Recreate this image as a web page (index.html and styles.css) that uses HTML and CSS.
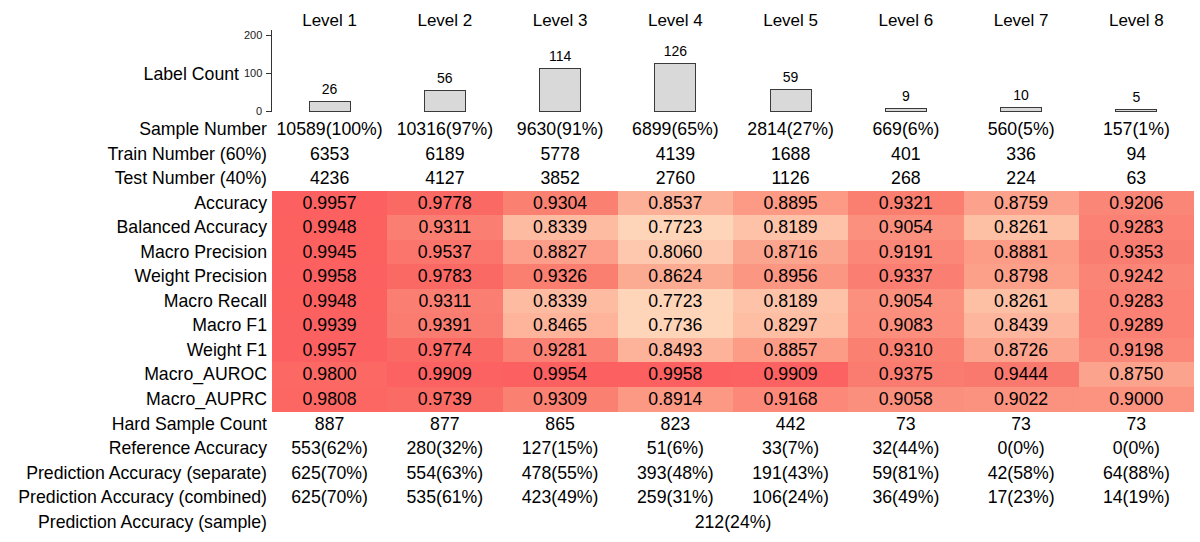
FILE: index.html
```html
<!DOCTYPE html>
<html lang="en">
<head>
<meta charset="utf-8">
<title>Level metrics</title>
<link rel="stylesheet" href="styles.css">
</head>
<body>
<div class="fig">
  <div class="corner"></div>
  <div class="lvl">Level 1</div>
  <div class="lvl">Level 2</div>
  <div class="lvl">Level 3</div>
  <div class="lvl">Level 4</div>
  <div class="lvl">Level 5</div>
  <div class="lvl">Level 6</div>
  <div class="lvl">Level 7</div>
  <div class="lvl">Level 8</div>

  <div class="axis-cell">
    <span class="axis-title">Label Count</span>
    <div class="axis">
      <div class="ticks">
        <div class="tick"><span>200</span><i></i></div>
        <div class="tick"><span>100</span><i></i></div>
        <div class="tick"><span>0</span><i></i></div>
      </div>
      <div class="axis-line"></div>
    </div>
  </div>
  <div class="bar-cell"><span class="bar-val">26</span><div class="bar" style="height:10.9px"></div></div>
  <div class="bar-cell"><span class="bar-val">56</span><div class="bar" style="height:22.3px"></div></div>
  <div class="bar-cell"><span class="bar-val">114</span><div class="bar" style="height:44.3px"></div></div>
  <div class="bar-cell"><span class="bar-val">126</span><div class="bar" style="height:48.9px"></div></div>
  <div class="bar-cell"><span class="bar-val">59</span><div class="bar" style="height:23.4px"></div></div>
  <div class="bar-cell"><span class="bar-val">9</span><div class="bar" style="height:4.4px"></div></div>
  <div class="bar-cell"><span class="bar-val">10</span><div class="bar" style="height:4.8px"></div></div>
  <div class="bar-cell"><span class="bar-val">5</span><div class="bar" style="height:2.9px"></div></div>

  <div class="lab">Sample Number</div>
  <div class="val">10589(100%)</div><div class="val">10316(97%)</div><div class="val">9630(91%)</div><div class="val">6899(65%)</div><div class="val">2814(27%)</div><div class="val">669(6%)</div><div class="val">560(5%)</div><div class="val">157(1%)</div>

  <div class="lab">Train Number (60%)</div>
  <div class="val">6353</div><div class="val">6189</div><div class="val">5778</div><div class="val">4139</div><div class="val">1688</div><div class="val">401</div><div class="val">336</div><div class="val">94</div>

  <div class="lab">Test Number (40%)</div>
  <div class="val">4236</div><div class="val">4127</div><div class="val">3852</div><div class="val">2760</div><div class="val">1126</div><div class="val">268</div><div class="val">224</div><div class="val">63</div>

  <div class="lab">Accuracy</div>
  <div class="val heat">0.9957</div><div class="val heat">0.9778</div><div class="val heat">0.9304</div><div class="val heat">0.8537</div><div class="val heat">0.8895</div><div class="val heat">0.9321</div><div class="val heat">0.8759</div><div class="val heat">0.9206</div>

  <div class="lab">Balanced Accuracy</div>
  <div class="val heat">0.9948</div><div class="val heat">0.9311</div><div class="val heat">0.8339</div><div class="val heat">0.7723</div><div class="val heat">0.8189</div><div class="val heat">0.9054</div><div class="val heat">0.8261</div><div class="val heat">0.9283</div>

  <div class="lab">Macro Precision</div>
  <div class="val heat">0.9945</div><div class="val heat">0.9537</div><div class="val heat">0.8827</div><div class="val heat">0.8060</div><div class="val heat">0.8716</div><div class="val heat">0.9191</div><div class="val heat">0.8881</div><div class="val heat">0.9353</div>

  <div class="lab">Weight Precision</div>
  <div class="val heat">0.9958</div><div class="val heat">0.9783</div><div class="val heat">0.9326</div><div class="val heat">0.8624</div><div class="val heat">0.8956</div><div class="val heat">0.9337</div><div class="val heat">0.8798</div><div class="val heat">0.9242</div>

  <div class="lab">Macro Recall</div>
  <div class="val heat">0.9948</div><div class="val heat">0.9311</div><div class="val heat">0.8339</div><div class="val heat">0.7723</div><div class="val heat">0.8189</div><div class="val heat">0.9054</div><div class="val heat">0.8261</div><div class="val heat">0.9283</div>

  <div class="lab">Macro F1</div>
  <div class="val heat">0.9939</div><div class="val heat">0.9391</div><div class="val heat">0.8465</div><div class="val heat">0.7736</div><div class="val heat">0.8297</div><div class="val heat">0.9083</div><div class="val heat">0.8439</div><div class="val heat">0.9289</div>

  <div class="lab">Weight F1</div>
  <div class="val heat">0.9957</div><div class="val heat">0.9774</div><div class="val heat">0.9281</div><div class="val heat">0.8493</div><div class="val heat">0.8857</div><div class="val heat">0.9310</div><div class="val heat">0.8726</div><div class="val heat">0.9198</div>

  <div class="lab">Macro_AUROC</div>
  <div class="val heat">0.9800</div><div class="val heat">0.9909</div><div class="val heat">0.9954</div><div class="val heat">0.9958</div><div class="val heat">0.9909</div><div class="val heat">0.9375</div><div class="val heat">0.9444</div><div class="val heat">0.8750</div>

  <div class="lab">Macro_AUPRC</div>
  <div class="val heat">0.9808</div><div class="val heat">0.9739</div><div class="val heat">0.9309</div><div class="val heat">0.8914</div><div class="val heat">0.9168</div><div class="val heat">0.9058</div><div class="val heat">0.9022</div><div class="val heat">0.9000</div>

  <div class="lab">Hard Sample Count</div>
  <div class="val">887</div><div class="val">877</div><div class="val">865</div><div class="val">823</div><div class="val">442</div><div class="val">73</div><div class="val">73</div><div class="val">73</div>

  <div class="lab">Reference Accuracy</div>
  <div class="val">553(62%)</div><div class="val">280(32%)</div><div class="val">127(15%)</div><div class="val">51(6%)</div><div class="val">33(7%)</div><div class="val">32(44%)</div><div class="val">0(0%)</div><div class="val">0(0%)</div>

  <div class="lab">Prediction Accuracy (separate)</div>
  <div class="val">625(70%)</div><div class="val">554(63%)</div><div class="val">478(55%)</div><div class="val">393(48%)</div><div class="val">191(43%)</div><div class="val">59(81%)</div><div class="val">42(58%)</div><div class="val">64(88%)</div>

  <div class="lab">Prediction Accuracy (combined)</div>
  <div class="val">625(70%)</div><div class="val">535(61%)</div><div class="val">423(49%)</div><div class="val">259(31%)</div><div class="val">106(24%)</div><div class="val">36(49%)</div><div class="val">17(23%)</div><div class="val">14(19%)</div>

  <div class="lab">Prediction Accuracy (sample)</div>
  <div class="val span8">212(24%)</div>
</div>
<script src="script.js"></script>
</body>
</html>
```

FILE: styles.css
```css
html, body {
  margin: 0;
  padding: 0;
  background: #ffffff;
}

body {
  font-family: "Liberation Sans", Arial, Helvetica, sans-serif;
  color: #000000;
}

.fig {
  display: grid;
  grid-template-columns: 272px repeat(8, 115.25px);
  grid-template-rows: 30px 87px repeat(17, 24.55px);
  font-size: 17.7px;
}

.lvl {
  display: flex;
  align-items: flex-end;
  justify-content: center;
  font-size: 17px;
  line-height: 19px;
  white-space: nowrap;
}

/* Label count axis */
.axis-cell {
  display: flex;
  justify-content: flex-end;
  align-items: center;
}

.axis-title {
  margin-right: 5px;
  line-height: 20px;
  white-space: nowrap;
}

.axis {
  display: flex;
  align-self: stretch;
}

.ticks {
  display: flex;
  flex-direction: column;
  justify-content: space-between;
  padding-top: 0;
  margin-top: -1px;
}

.tick {
  display: flex;
  align-items: center;
  height: 12px;
  font-size: 11px;
  line-height: 12px;
  color: #1a1a1a;
}

.tick span {
  width: 18px;
  text-align: right;
  margin-right: 4px;
}

.tick i {
  display: block;
  width: 5px;
  height: 1px;
  background: #333333;
}

.axis-line {
  align-self: flex-start;
  width: 1px;
  height: 82px;
  margin-top: 0;
  background: #333333;
}

/* bars */
.bar-cell {
  display: flex;
  flex-direction: column;
  justify-content: flex-end;
  align-items: center;
  padding-bottom: 5px;
}

.bar-val {
  font-size: 14px;
  line-height: 16px;
  margin-bottom: 4px;
}

.bar {
  box-sizing: border-box;
  width: 42px;
  background: #d9d9d9;
  border: 1px solid #3a3a3a;
}

/* table rows */
.lab {
  text-align: right;
  padding-right: 5px;
  line-height: 24.55px;
  white-space: nowrap;
}

.val {
  text-align: center;
  line-height: 24.55px;
  white-space: nowrap;
}

.span8 {
  grid-column: span 8;
}
```

FILE: script.js
```js
(function () {
  var stops = [
    [0.77, [254, 214, 186]],
    [0.83, [253, 190, 164]],
    [0.88, [252, 160, 138]],
    [0.93, [250, 128, 114]],
    [0.996, [252, 96, 96]]
  ];
  function color(v) {
    if (v <= stops[0][0]) return stops[0][1];
    for (var i = 1; i < stops.length; i++) {
      if (v <= stops[i][0]) {
        var a = stops[i - 1], b = stops[i];
        var t = (v - a[0]) / (b[0] - a[0]);
        return a[1].map(function (c, k) { return Math.round(c + (b[1][k] - c) * t); });
      }
    }
    return stops[stops.length - 1][1];
  }
  var cells = document.querySelectorAll('.heat');
  for (var i = 0; i < cells.length; i++) {
    var v = parseFloat(cells[i].textContent);
    var c = color(v);
    cells[i].style.backgroundColor = 'rgb(' + c.join(',') + ')';
  }
})();
```
